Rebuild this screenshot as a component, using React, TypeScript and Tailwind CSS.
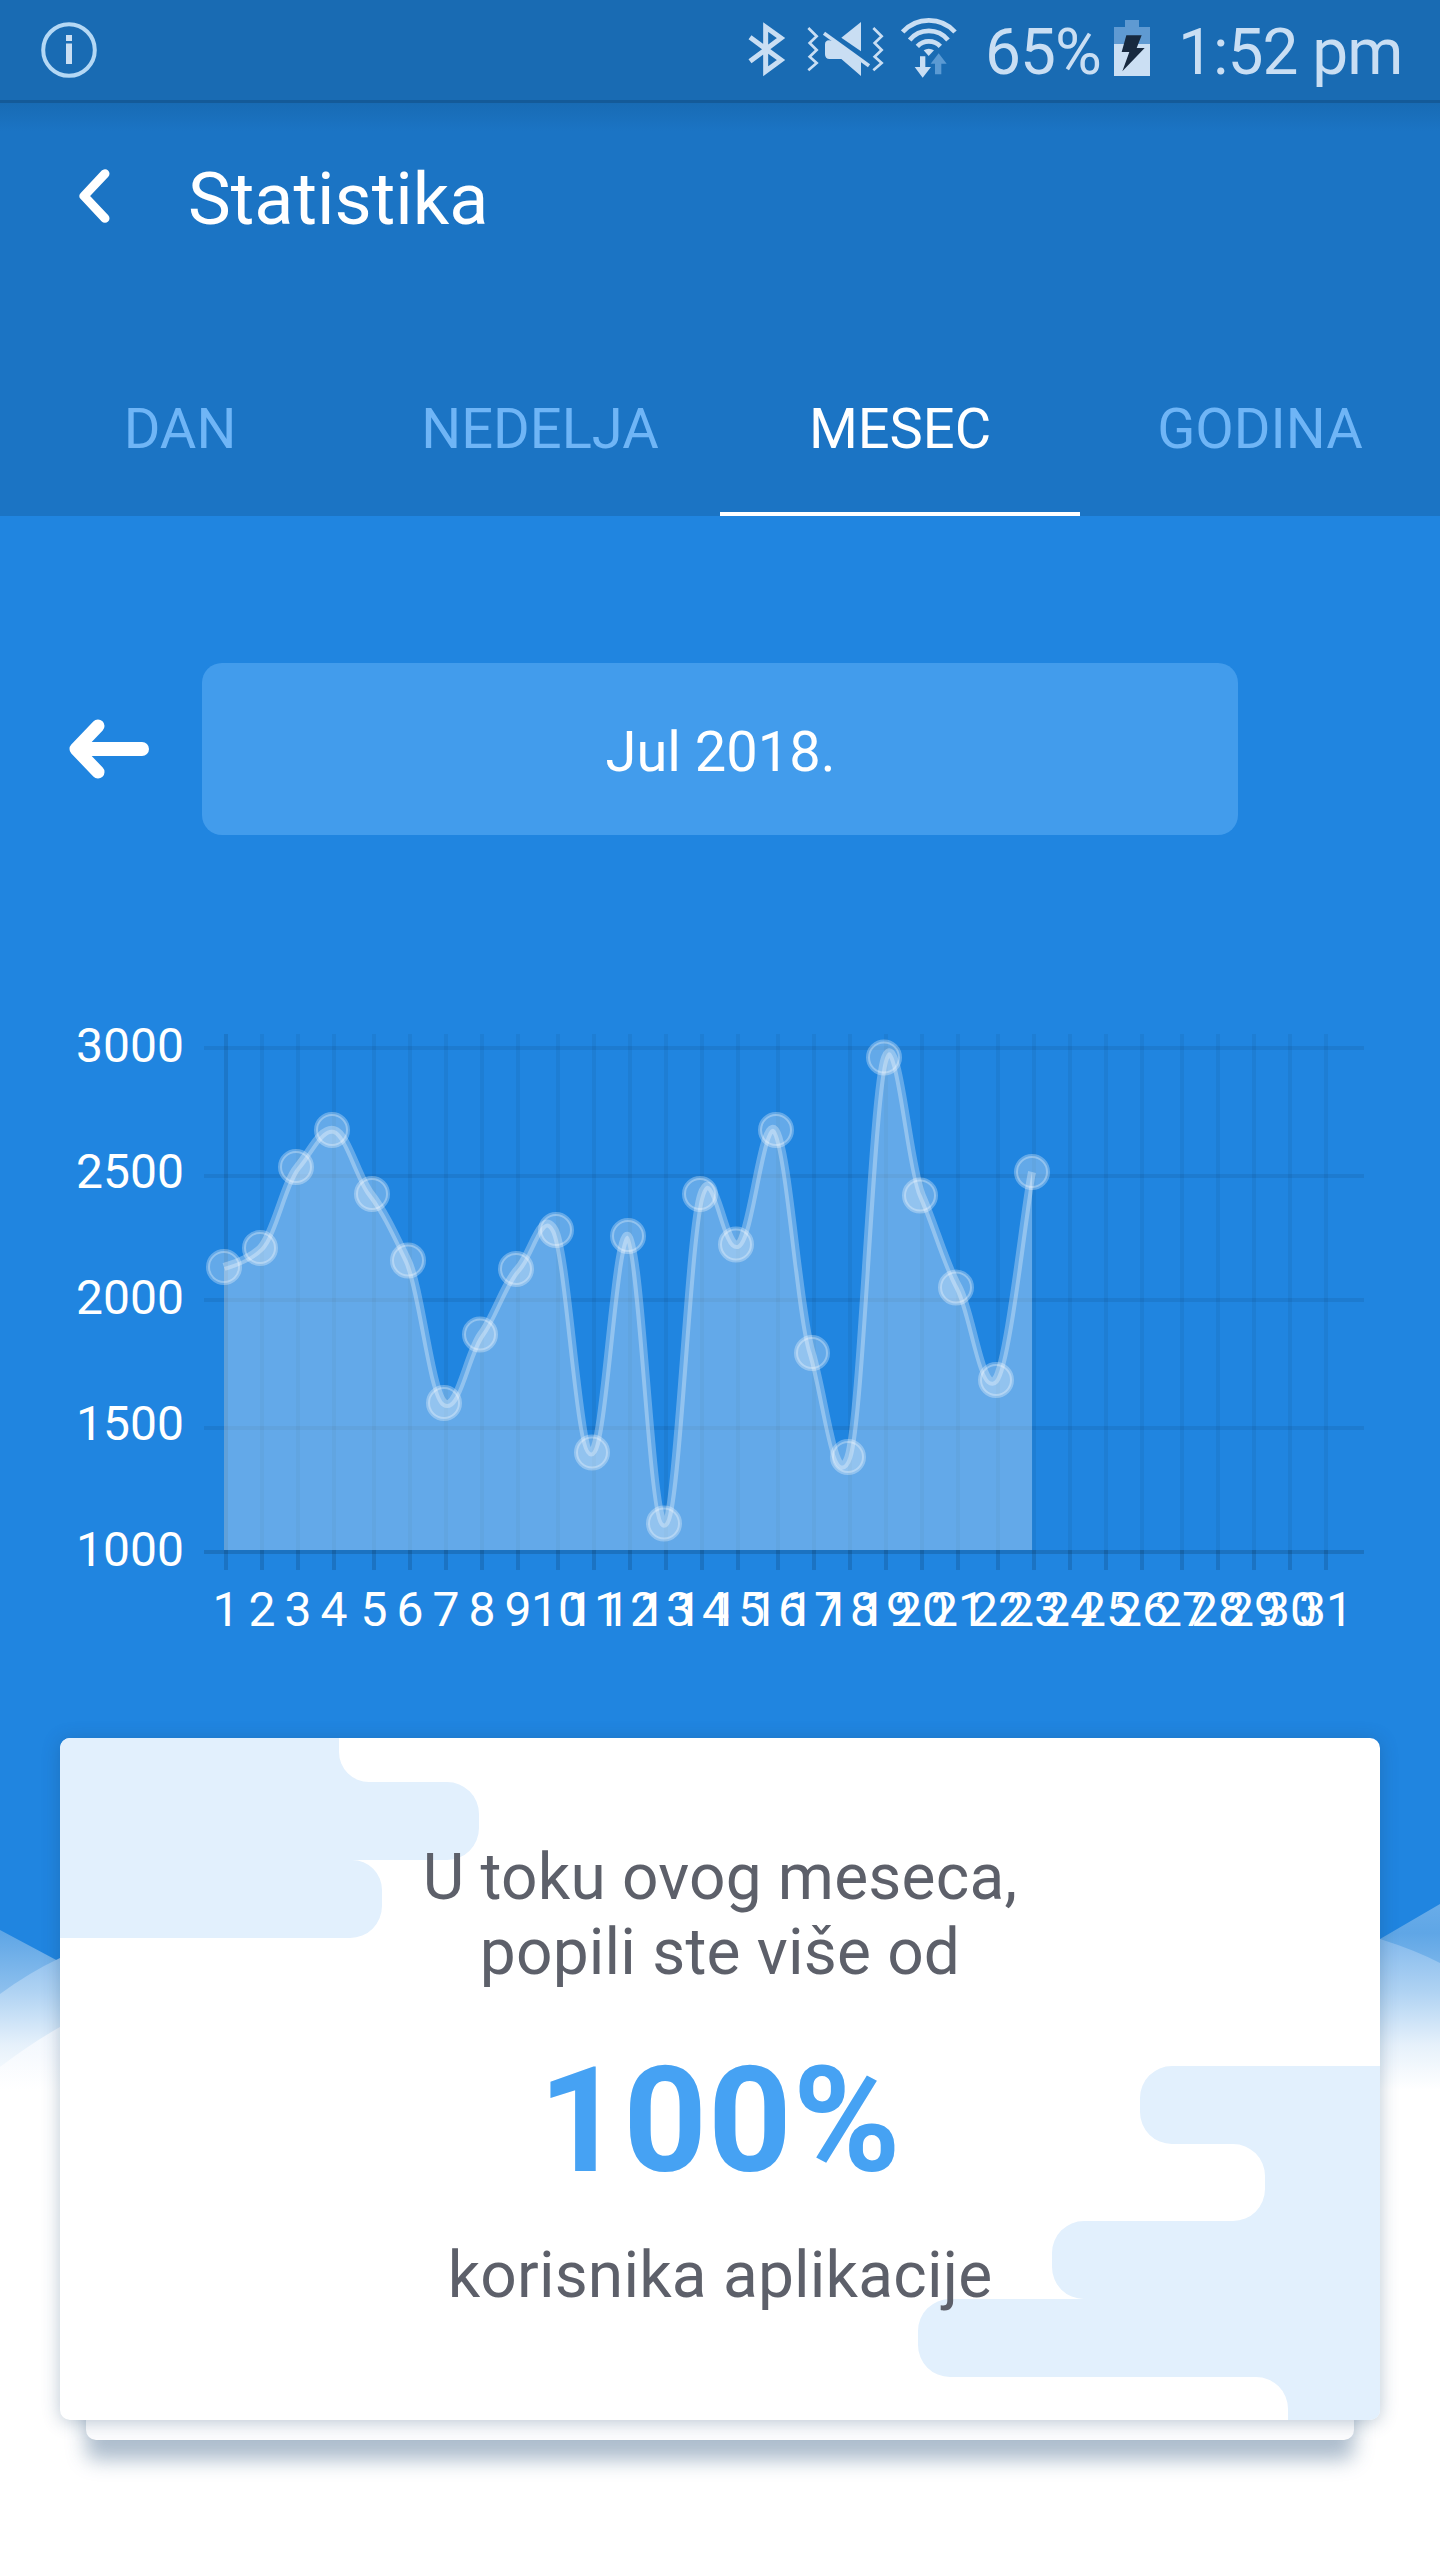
const TABS = ["DAN", "NEDELJA", "MESEC", "GODINA"];
const ACTIVE_TAB = "MESEC";

const DAY_X = [
  226, 262, 298, 334, 374, 410, 446, 482, 518, 558, 594, 630, 666, 702, 738, 778,
  814, 850, 886, 922, 958, 998, 1034, 1070, 1106, 1142, 1182, 1218, 1254, 1290, 1326,
];

const LEVELS = [
  { label: "3000", y: 1048, baseline: 1062 },
  { label: "2500", y: 1176, baseline: 1188 },
  { label: "2000", y: 1300, baseline: 1314 },
  { label: "1500", y: 1428, baseline: 1440 },
  { label: "1000", y: 1552, baseline: 1566 },
];

const VALUES = [
  1267, 1248, 1167, 1130, 1194, 1260.5, 1403, 1334.5, 1269, 1230, 1452.5, 1236,
  1523.5, 1194, 1244.5, 1130, 1353, 1457, 1057.5, 1195.5, 1287.5, 1380, 1172,
];

const BOTTOM = 1550;
const STEP = 36.73;

function smoothPath(): string {
  const pts = VALUES.map((y, i) => [224 + i * STEP, y]);
  const kx = 0.18;
  const ky = 0.13;
  let d = `M${pts[0][0]} ${pts[0][1]}`;
  for (let i = 0; i < pts.length - 1; i++) {
    const prev = pts[i - 1] ?? pts[i];
    const a = pts[i];
    const b = pts[i + 1];
    const next = pts[i + 2] ?? b;
    d += `C${a[0] + (b[0] - prev[0]) * kx} ${a[1] + (b[1] - prev[1]) * ky} `;
    d += `${b[0] - (next[0] - a[0]) * kx} ${b[1] - (next[1] - a[1]) * ky} ${b[0]} ${b[1]}`;
  }
  return d;
}

function StatusBar() {
  return (
    <div className="flex h-[100px] items-start bg-[#196bb3] text-[#c9def3]">
      <svg className="ml-[40px] mt-[21px] h-[58px] w-[58px]" viewBox="0 0 58 58" fill="none">
        <circle cx="29" cy="29" r="25.8" stroke="#b4d8f5" strokeWidth="4" />
        <path d="M29 14v6M29 22.500v20.500" stroke="currentColor" strokeWidth="6" />
      </svg>

      {/* Bluetooth */}
      <svg className="ml-[650px] mt-[21px] h-[56px] w-[38px]" viewBox="24 33 114 168" fill="none">
        <path d="M30 82L123 150L77 184V51L123 84L30 154" stroke="currentColor" strokeWidth="15" />
      </svg>

      {/* Muted speaker with vibration */}
      <svg className="ml-[21px] mt-[21px] h-[56px] w-[77px]" viewBox="200 33 231 168" fill="none">
        <g stroke="currentColor" strokeWidth="8">
          <path d="M204 54L229 79L208 99L229 120L208 140L229 159L204 181" />
          <path d="M399 54L424 79L403 99L424 120L403 140L424 159L399 181" />
        </g>
        <path d="M303 83L362 36V124Z" fill="currentColor" />
        <path d="M251 70L386 167" stroke="currentColor" strokeWidth="11" />
        <path d="M266 91L290 95L362 155V198L303 147H268Q254 147 254 133V103Q254 92 266 91Z" fill="currentColor" />
      </svg>

      {/* Wifi with traffic arrows */}
      <svg className="ml-[17px] mt-[18px] h-[60px] w-[56px]" viewBox="484 25 168 180" fill="none">
        <g stroke="currentColor" strokeWidth="14">
          <path d="M489 67A106 106 0 0 1 646 67" />
          <path d="M510 91A74 74 0 0 1 625 91" />
          <path d="M533 110A48 48 0 0 1 602 110" />
        </g>
        <path d="M552 122Q567 112 583 122L567 139Z" fill="currentColor" />
        <path d="M541 140H557V172H574L549 204L525 172H541Z" fill="currentColor" />
        <path d="M597 131L621 162H605V194H586V162H573Z" fill="#5b9ad3" />
      </svg>

      <span className="ml-[28px] mt-[15px] w-[127px] text-[64px] leading-[75px] tracking-[-1px]">65%</span>

      <svg className="ml-[2px] mt-[20px] h-[56px] w-[36px]" viewBox="1122 30 108 168">
        <path d="M1155 30H1197V51H1230V102H1122V51H1155Z" fill="#5f9ad2" />
        <path d="M1122 102H1230V198H1122Z" fill="#cbdff3" />
        <path d="M1159 76H1205L1190 114H1214L1147 184L1168 126H1145Z" fill="#17293f" />
      </svg>

      <span className="ml-[28px] mt-[15px] whitespace-nowrap text-[64px] leading-[75px] tracking-[-1px]">1:52 pm</span>
    </div>
  );
}

function Header() {
  return (
    <div className="flex h-[416px] flex-col border-t-[3px] border-[#145a98] bg-[#1b74c4] bg-linear-to-b from-[#186bb4] to-[#1b74c4] to-[28px]">
      <div className="flex h-[193px] items-center">
        <svg className="mb-[8px] ml-[76px] h-[60px] w-[36px]" viewBox="48 17 108 180" fill="none">
          <path d="M135 40L72 107L135 174" stroke="white" strokeWidth="27" strokeLinecap="round" strokeLinejoin="round" />
        </svg>
        <h1 className="ml-[76px] text-[72px] leading-[84px] text-white">Statistika</h1>
      </div>
      <div className="grid h-[220px] grid-cols-4">
        {TABS.map((tab) => (
          <button
            key={tab}
            className={
              tab === ACTIVE_TAB
                ? "border-b-4 border-white pt-[50px] text-[56px] text-white"
                : "border-b-4 border-transparent pt-[50px] text-[56px] text-[#6fb5f6]"
            }
          >
            {tab}
          </button>
        ))}
      </div>
    </div>
  );
}

function MonthPicker() {
  return (
    <div className="mt-[147px] flex h-[172px] items-center">
      <svg className="ml-[66px] h-[64px] w-[86px]" viewBox="0 0 86 64" fill="none" stroke="white" strokeLinecap="round" strokeLinejoin="round">
        <path d="M32 9L10 32L32 55" strokeWidth="13" />
        <path d="M14 32H76" strokeWidth="14" />
      </svg>
      <div className="ml-[50px] flex h-full w-[1036px] items-center justify-center rounded-[20px] bg-[#429cec] pl-px pt-[6px] text-[56px] text-white">
        Jul 2018.
      </div>
    </div>
  );
}

function Chart() {
  const line = smoothPath();
  return (
    <svg className="mt-[165px] h-[660px] w-full" viewBox="0 1000 1440 660" fill="none">
      <g stroke="black" strokeWidth="4">
        {LEVELS.map((l) => (
          <path key={l.label} d={`M204 ${l.y}H1364`} strokeOpacity={l.label === "1000" ? 0.14 : 0.07} />
        ))}
        {DAY_X.map((x, i) => (
          <g key={x}>
            <path d={`M${x} 1034V1550`} strokeOpacity={i === 0 ? 0.1 : 0.05} />
            <path d={`M${x} 1550V1570`} strokeOpacity="0.13" />
          </g>
        ))}
      </g>

      <path d={`${line}V${BOTTOM}H224Z`} fill="white" fillOpacity="0.3" />
      <path d={line} stroke="white" strokeOpacity="0.3" strokeWidth="8" />
      {VALUES.map((y, i) => (
        <circle
          key={i}
          cx={DAY_X[i] - 2}
          cy={y}
          r="16"
          fill="white"
          fillOpacity="0.3"
          stroke="white"
          strokeOpacity="0.3"
          strokeWidth="4"
        />
      ))}

      <g fill="white" fontSize="48">
        {LEVELS.map((l) => (
          <text key={l.label} x="184" y={l.baseline} textAnchor="end">{l.label}</text>
        ))}
        {DAY_X.map((x, i) => (
          <text key={x} x={x} y="1626" textAnchor="middle">{i + 1}</text>
        ))}
      </g>
    </svg>
  );
}

function Waves() {
  return (
    <svg className="absolute left-0 top-[1880px] h-[680px] w-full" viewBox="0 1880 1440 680">
      <defs>
        <linearGradient id="far" gradientUnits="userSpaceOnUse" x1="0" y1="1900" x2="0" y2="2010">
          <stop offset="0" stopColor="#6aade9" />
          <stop offset="0.3" stopColor="#5fa6e6" />
          <stop offset="1" stopColor="#9cc8f0" />
        </linearGradient>
        <linearGradient id="mid" gradientUnits="userSpaceOnUse" x1="0" y1="1940" x2="0" y2="2090">
          <stop offset="0" stopColor="#86bbed" />
          <stop offset="0.35" stopColor="#b0d3f3" />
          <stop offset="0.7" stopColor="#e6f1fb" />
          <stop offset="1" stopColor="#ffffff" />
        </linearGradient>
        <linearGradient id="near" gradientUnits="userSpaceOnUse" x1="0" y1="2028" x2="0" y2="2090">
          <stop offset="0" stopColor="#f0f6fd" />
          <stop offset="1" stopColor="#ffffff" />
        </linearGradient>
      </defs>
      <path d="M0 1930L60 1962L720 2080L1380 1939L1440 1904V2090H0Z" fill="url(#far)" />
      <path d="M0 1994Q30 1972 60 1958L1380 1939Q1415 1950 1440 1963V2090H0Z" fill="url(#mid)" />
      <path d="M0 2067Q30 2044 60 2027H720V2090H0Z" fill="url(#near)" />
      <path d="M0 2089H1440V2560H0Z" fill="#ffffff" />
    </svg>
  );
}

function Card() {
  return (
    <div className="relative mx-[60px] mt-[78px] h-[702px]">
      <div className="absolute inset-x-[26px] bottom-0 h-[120px] rounded-[10px] bg-[#fdfdfe] shadow-[0_20px_20px_rgba(50,90,130,0.4)]" />
      <div className="relative h-[682px] overflow-hidden rounded-[10px] bg-white shadow-[0_2px_18px_rgba(30,70,110,0.3)]">
        <svg className="absolute inset-0 h-full w-full" viewBox="60 1738 1320 682" fill="#e2f0fd">
          <path d="M60 1738H339V1752A30 30 0 0 0 369 1782H447A32 32 0 0 1 479 1814V1828A32 32 0 0 1 447 1860H352A30 30 0 0 1 382 1890V1906A32 32 0 0 1 350 1938H60Z" />
          <path d="M1380 2066H1172A32 32 0 0 0 1140 2098V2112A32 32 0 0 0 1172 2144H1233A32 32 0 0 1 1265 2176V2189A32 32 0 0 1 1233 2221H1084A32 32 0 0 0 1052 2253V2267A32 32 0 0 0 1084 2299H950A32 32 0 0 0 918 2331V2345A32 32 0 0 0 950 2377H1256A32 32 0 0 1 1288 2409V2420H1380Z" />
        </svg>
        <div className="relative flex flex-col items-center pt-[102px] text-center text-[64px] leading-[75px] tracking-[0.2px] text-[#5d606a]">
          <p>U toku ovog meseca,</p>
          <p>popili ste više od</p>
          <p className="mt-[47px] text-[146px] font-bold leading-[169px] tracking-[1px] text-[#46a2f3]">100%</p>
          <p className="mt-[32px]">korisnika aplikacije</p>
        </div>
      </div>
    </div>
  );
}

export default function App() {
  return (
    <div className="relative h-[2560px] w-[1440px] overflow-hidden bg-[#2085e0] font-[Roboto,sans-serif]">
      <Waves />
      <div className="relative flex flex-col">
        <StatusBar />
        <Header />
        <MonthPicker />
        <Chart />
        <Card />
      </div>
    </div>
  );
}
